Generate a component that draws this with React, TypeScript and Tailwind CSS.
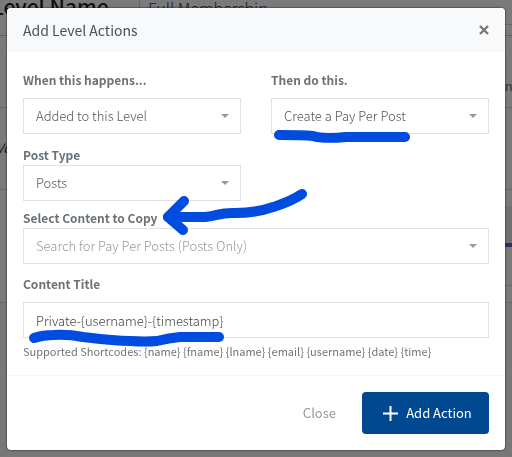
import React, { useState } from 'react';

interface SelectFieldProps {
  id: string;
  label: string;
  options: string[];
  muted?: boolean;
}

function SelectField({ id, label, options, muted }: SelectFieldProps) {
  return (
    <div>
      <label htmlFor={id} className="block text-[12px] leading-5 font-bold text-[#6a7278]">
        {label}
      </label>
      <div className="relative">
        <select
          id={id}
          className={`block h-9 w-full appearance-none border border-[#dee2e6] bg-white pr-8 pl-3 text-[13px] font-light ${
            muted ? 'text-[#999999]' : 'text-[#555555]'
          }`}
        >
          {options.map((option) => (
            <option key={option}>{option}</option>
          ))}
        </select>
        <svg
          viewBox="0 0 8 4"
          className="pointer-events-none absolute top-4 right-3 h-1 w-2 fill-[#999999]"
        >
          <path d="M0 0h8L4 4z" />
        </svg>
      </div>
    </div>
  );
}

// The settings page that stays dimmed behind the dialog
function LevelPage() {
  return (
    <div className="flex h-screen flex-col overflow-hidden bg-[#f4f4f4]">
      <div className="flex h-9 border-b border-[#bbbbbb]">
        <h1 className="-ml-2 w-[147px] text-[21px] leading-3 font-medium whitespace-nowrap text-[#222222]">
          Level Name
        </h1>
        <div className="mb-[10px] grow border-b border-l border-[#cccccc] pl-2 text-[16px] leading-4 font-light text-[#333333]">
          Full Membership
        </div>
      </div>
      <p className="-mr-2 h-[72px] border-b border-[#cccccc] pt-10 text-right text-[13px] leading-5 text-[#666666]">
        na
      </p>
      <p className="-ml-1 h-[82px] border-b border-[#cccccc] pt-[30px] text-[13px] leading-5 text-[#222222] italic">
        Vo
      </p>
      {/* The highlighted row only starts in the right half */}
      <div className="mt-4 ml-[50%] h-[41px] border-b-4 border-[#5560b8] bg-[#dfe3e8]" />
      <div className="ml-[50%] h-[39px] border-b border-[#cccccc]" />
      <div className="mt-4 grow border-t border-[#cccccc] bg-[#f1f1f1]" />
    </div>
  );
}

export default function App() {
  const [title, setTitle] = useState<string>('Private-{username}-{timestamp}');

  return (
    <div className="font-['Noto_Sans_CJK_SC',sans-serif]">
      <LevelPage />
      <div className="fixed inset-0 bg-black/50 px-[7px] py-2">
        <div
          role="dialog"
          aria-labelledby="dialog-title"
          className="relative overflow-hidden rounded bg-white shadow-[0_0_2px_#000000]"
        >
          <header className="flex h-11 items-center justify-between bg-[#f8f9fa] px-4">
            <h2 id="dialog-title" className="text-[14px] text-[#495057]">
              Add Level Actions
            </h2>
            <button type="button" aria-label="Close dialog" className="text-[#777777]">
              <svg viewBox="0 0 10 10" className="size-[10px] stroke-current stroke-[2.4]">
                <path d="M1 1l8 8M9 1l-8 8" />
              </svg>
            </button>
          </header>

          <div className="px-4 pt-[18px] pb-[15px]">
            <div className="mb-[11px] grid grid-cols-2 gap-[30px] [&_label]:mb-2">
              <SelectField id="trigger" label="When this happens..." options={['Added to this Level']} />
              <SelectField id="action" label="Then do this." options={['Create a Pay Per Post']} />
            </div>
            <div className="mb-[7px] grid grid-cols-2 gap-[30px]">
              <SelectField id="post-type" label="Post Type" options={['Posts']} />
            </div>
            <SelectField
              id="content"
              label="Select Content to Copy"
              options={['Search for Pay Per Posts (Posts Only)']}
              muted
            />
            <label
              htmlFor="content-title"
              className="mt-[10px] mb-2 block text-[12px] leading-5 font-bold text-[#6a7278]"
            >
              Content Title
            </label>
            <input
              id="content-title"
              type="text"
              value={title}
              onChange={(e) => setTitle(e.target.value)}
              className="block h-9 w-full border border-[#dee2e6] px-3 text-[13px] font-light text-[#444444]"
            />
            <p className="mt-1 text-[11px] leading-[18px] text-[#6c757d]">
              Supported Shortcodes: {'{name} {fname} {lname} {email} {username} {date} {time}'}
            </p>
          </div>

          <footer className="flex items-center justify-end gap-[26px] border-t border-[#f4f5f6] p-4">
            <button type="button" className="text-[13px] text-[#999999]">
              Close
            </button>
            <button
              type="button"
              className="flex h-[42px] w-[127px] items-center justify-center gap-2 rounded bg-[#004890] pl-1 text-[13px] text-white"
            >
              <svg viewBox="0 0 15 15" className="size-[15px] stroke-current stroke-2">
                <path d="M7.5 0v15M0 7.5h15" />
              </svg>
              Add Action
            </button>
          </footer>

          {/* Marker strokes drawn over the form */}
          <svg
            viewBox="0 0 498 442"
            className="pointer-events-none absolute inset-x-0 top-0 w-full fill-none stroke-[#004ce0] stroke-10"
            strokeLinecap="round"
            strokeLinejoin="round"
          >
            <path d="M272 127c14 0 24 0 34 1 9 3 22 2 33 1h59" />
            <path d="M295 186c-12 8-20 10-29 13-14 5-24 6-38 6-12-1-20 3-30 4h-37" />
            <path d="M177 193l-16 16 15 13" />
            <path d="M27 330q9-3 19-3c14-1 20 0 30 2 16 2 30 4 47 4q16 1 27 0 12-3 23-4h39" />
          </svg>
        </div>
      </div>
    </div>
  );
}
